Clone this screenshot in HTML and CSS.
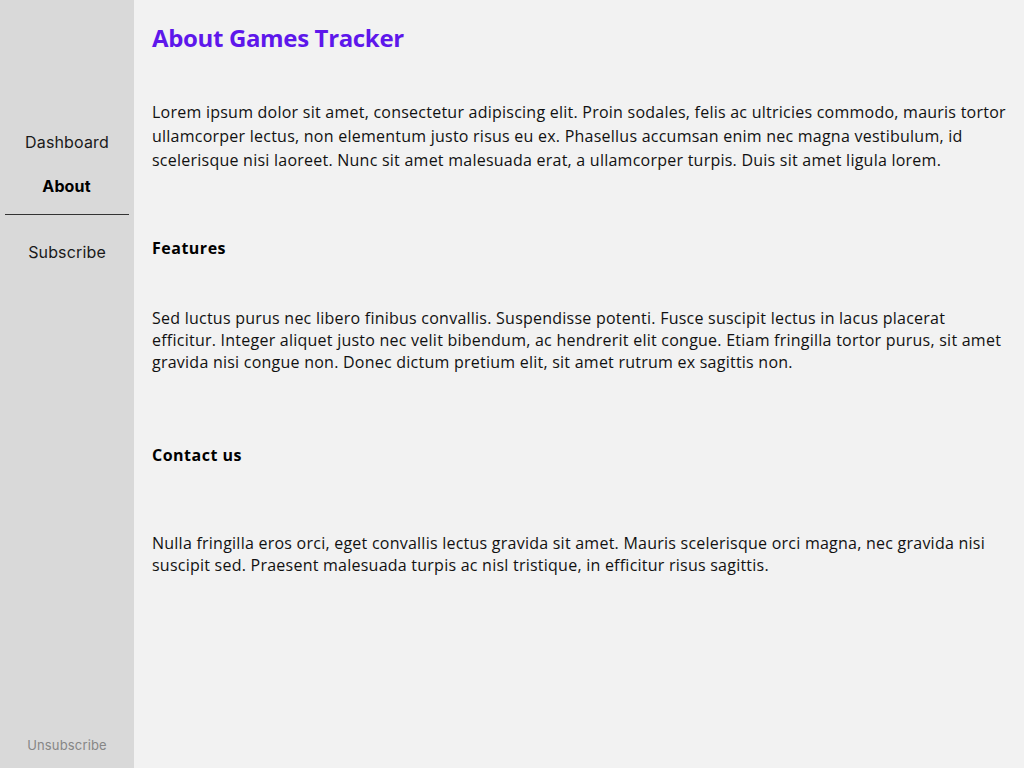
FILE: index.html
```html
<!DOCTYPE html>
<html lang="en">
<head>
<meta charset="utf-8">
<title>About Games Tracker</title>
<link rel="stylesheet" href="styles.css">
</head>
<body>
<div class="app">
  <aside class="sidebar">
    <nav class="nav">
      <a class="nav-link" href="#">Dashboard</a>
      <a class="nav-link active" href="#">About</a>
      <a class="nav-link" href="#">Subscribe</a>
    </nav>
    <a class="unsub" href="#">Unsubscribe</a>
  </aside>
  <main class="content">
    <h1 class="title">About Games Tracker</h1>
    <p class="intro">Lorem ipsum dolor sit amet, consectetur adipiscing elit. Proin sodales, felis ac ultricies commodo, mauris tortor ullamcorper lectus, non elementum justo risus eu ex. Phasellus accumsan enim nec magna vestibulum, id scelerisque nisi laoreet. Nunc sit amet malesuada erat, a ullamcorper turpis. Duis sit amet ligula lorem.</p>
    <h2 class="section-title features">Features</h2>
    <p class="para para-features">Sed luctus purus nec libero finibus convallis. Suspendisse potenti. Fusce suscipit lectus in lacus placerat efficitur. Integer aliquet justo nec velit bibendum, ac hendrerit elit congue. Etiam fringilla tortor purus, sit amet gravida nisi congue non. Donec dictum pretium elit, sit amet rutrum ex sagittis non.</p>
    <h2 class="section-title contact">Contact us</h2>
    <p class="para para-contact">Nulla fringilla eros orci, eget convallis lectus gravida sit amet. Mauris scelerisque orci magna, nec gravida nisi suscipit sed. Praesent malesuada turpis ac nisl tristique, in efficitur risus sagittis.</p>
  </main>
</div>
</body>
</html>
```

FILE: styles.css
```css
html, body {
  margin: 0;
  padding: 0;
  height: 100%;
}
body {
  background: #f2f2f2;
  font-family: "Open Sans", "Noto Sans", sans-serif;
  color: #111;
}
.app {
  display: flex;
  min-height: 100vh;
}
.sidebar {
  width: 134px;
  flex: 0 0 134px;
  background: #d9d9d9;
  display: flex;
  flex-direction: column;
  align-items: center;
  height: 768px;
  box-sizing: border-box;
}
.nav {
  display: flex;
  flex-direction: column;
  align-items: center;
  width: 100%;
  padding-top: 131px;
}
.nav-link {
  font-family: "Inter", "Noto Sans", sans-serif;
  font-size: 16px;
  line-height: 22px;
  letter-spacing: 0.15px;
  color: #1a1a1a;
  text-decoration: none;
}
.nav-link + .nav-link {
  margin-top: 22px;
}
.nav-link.active {
  font-weight: 700;
  color: #000;
  padding-bottom: 17px;
  border-bottom: 1px solid #333;
  width: 124px;
  text-align: center;
  margin-left: -1px;
}
.nav-link.active + .nav-link {
  margin-top: 26px;
}
.unsub {
  margin-top: auto;
  margin-bottom: 15px;
  font-family: "Inter", "Noto Sans", sans-serif;
  font-size: 13px;
  line-height: 16px;
  letter-spacing: 0.15px;
  color: #868686;
  text-decoration: none;
}
.content {
  flex: 1;
  padding: 23px 14px 0 18px;
}
.title {
  margin: 0;
  font-size: 24px;
  line-height: 30px;
  font-weight: 700;
  letter-spacing: -0.35px;
  color: #5e17eb;
}
.intro {
  margin: 47px 0 0;
  font-size: 16px;
  line-height: 24px;
  letter-spacing: 0.24px;
}
.section-title {
  margin: 0;
  font-size: 16px;
  line-height: 22px;
  font-weight: 700;
  letter-spacing: 0.5px;
  color: #000;
}
.features { margin-top: 65px; }
.contact { margin-top: 71px; }
.para {
  margin: 0;
  font-size: 16px;
  line-height: 22px;
  letter-spacing: 0.24px;
}
.para-features { margin-top: 48px; }
.para-contact { margin-top: 66px; }
```
